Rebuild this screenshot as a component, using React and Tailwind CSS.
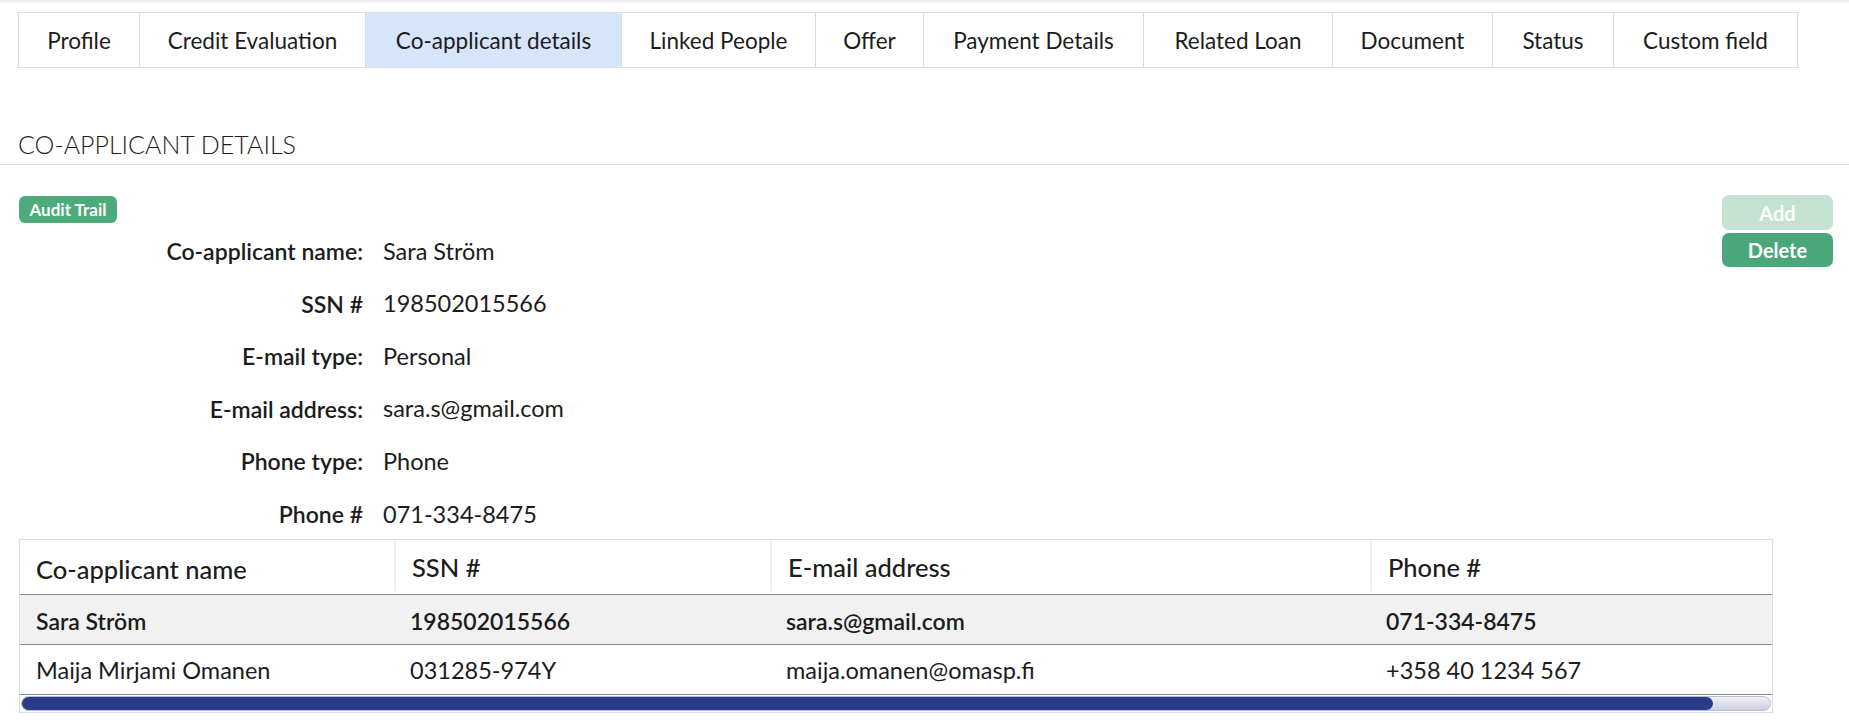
import React from 'react';

const tabs = [
  { label: 'Profile', w: 'w-[121px]' },
  { label: 'Credit Evaluation', w: 'w-[226px]' },
  { label: 'Co-applicant details', w: 'w-[256px]', active: true },
  { label: 'Linked People', w: 'w-[194px]' },
  { label: 'Offer', w: 'w-[108px]' },
  { label: 'Payment Details', w: 'w-[220px]' },
  { label: 'Related Loan', w: 'w-[189px]' },
  { label: 'Document', w: 'w-[160px]' },
  { label: 'Status', w: 'w-[121px]' },
  { label: 'Custom field', w: 'w-[183px]' },
];

const fields = [
  ['Co-applicant name:', 'Sara Ström'],
  ['SSN #', '198502015566'],
  ['E-mail type:', 'Personal'],
  ['E-mail address:', 'sara.s@gmail.com'],
  ['Phone type:', 'Phone'],
  ['Phone #', '071-334-8475'],
];

const rows = [
  { name: 'Sara Ström', ssn: '198502015566', email: 'sara.s@gmail.com', phone: '071-334-8475', selected: true },
  { name: 'Maija Mirjami Omanen', ssn: '031285-974Y', email: 'maija.omanen@omasp.fi', phone: '+358 40 1234 567' },
];

export default function App() {
  return (
    <div className="min-h-screen bg-white text-[#1c1c1c] font-[family-name:Lato,sans-serif]">
      <div className="h-[4px] bg-gradient-to-b from-[#ebebeb] to-white" />

      {/* Tabs */}
      <div className="pt-[8px] pl-[18px]">
        <div className="flex w-fit border border-[#dddddd]">
          {tabs.map((tab) => (
            <div
              key={tab.label}
              className={`${tab.w} h-[54px] pt-[2px] flex items-center justify-center border-r border-[#dddddd] last:border-r-0 text-[22.5px] ${
                tab.active ? 'bg-[#d7e5fb]' : 'bg-white'
              }`}
            >
              {tab.label}
            </div>
          ))}
        </div>
      </div>

      {/* Section heading */}
      <div className="pl-[18px] pt-[61px] pb-[4px] border-b border-[#dddddd]">
        <h2 className="text-[25px] leading-[31px] font-light text-[#1e1e1e]">CO-APPLICANT DETAILS</h2>
      </div>

      {/* Details */}
      <div className="flex justify-between pl-[19px] pr-[16px] pt-[31px]">
        <div>
          <div className="w-[98px] h-[27px] rounded-[6px] bg-[#4caa7b] text-white text-[17px] font-bold flex items-center justify-center">
            Audit Trail
          </div>
          <div className="grid grid-cols-[344px_auto] gap-x-[20px]">
            {fields.map(([label, value]) => (
              <React.Fragment key={label}>
                <div className="h-[52.6px] pt-[4px] flex items-center justify-end text-[23px] font-semibold">{label}</div>
                <div className="h-[52.6px] pt-[4px] flex items-center text-[23.5px]">{value}</div>
              </React.Fragment>
            ))}
          </div>
        </div>
        <div className="flex flex-col gap-[3px] w-[111px] -mt-[1px]">
          <button className="h-[35px] rounded-[7px] bg-[#c4e1d2] text-white text-[20px] font-bold">Add</button>
          <button className="h-[34px] rounded-[7px] bg-[#4aa77a] text-white text-[20px] font-bold">Delete</button>
        </div>
      </div>

      {/* Table */}
      <div className="pl-[19px]">
        <div className="w-[1754px] border border-[#dddddd]">
          <div className="grid grid-cols-[374px_376px_600px_1fr] h-[55px] border-b border-[#8a8a8a]">
            <div className="flex items-center px-4 pt-[5px] text-[25.5px] font-medium">Co-applicant name</div>
            <div className="flex items-center px-4 pt-[5px] text-[25.5px] font-medium border-l-2 border-[#f0f0f0] mb-[3px]">SSN #</div>
            <div className="flex items-center px-4 pt-[5px] text-[25.5px] font-medium border-l-2 border-[#f0f0f0] mb-[3px]">E-mail address</div>
            <div className="flex items-center px-4 pt-[5px] text-[25.5px] font-medium border-l-2 border-[#f0f0f0] mb-[3px]">Phone #</div>
          </div>
          {rows.map((r) => (
            <div
              key={r.ssn}
              className={`grid grid-cols-[374px_376px_600px_1fr] h-[50px] border-b border-[#8a8a8a] ${
                r.selected ? 'bg-[#f1f1f1] font-semibold text-[23px]' : 'bg-white text-[23.5px]'
              }`}
            >
              <div className="flex items-center px-4 pt-[4px]">{r.name}</div>
              <div className="flex items-center px-4 pt-[4px]">{r.ssn}</div>
              <div className="flex items-center px-4 pt-[4px]">{r.email}</div>
              <div className="flex items-center px-4 pt-[4px]">{r.phone}</div>
            </div>
          ))}
          {/* horizontal scrollbar */}
          <div className="px-[1px] py-[1px]">
            <div className="h-[15px] rounded-full border border-[#b8bdd3] bg-gradient-to-b from-[#f2f3f8] to-[#c9cde0]">
              <div className="h-full w-[calc(100%-57px)] rounded-full bg-[#283c8b]" />
            </div>
          </div>
        </div>
      </div>
    </div>
  );
}
